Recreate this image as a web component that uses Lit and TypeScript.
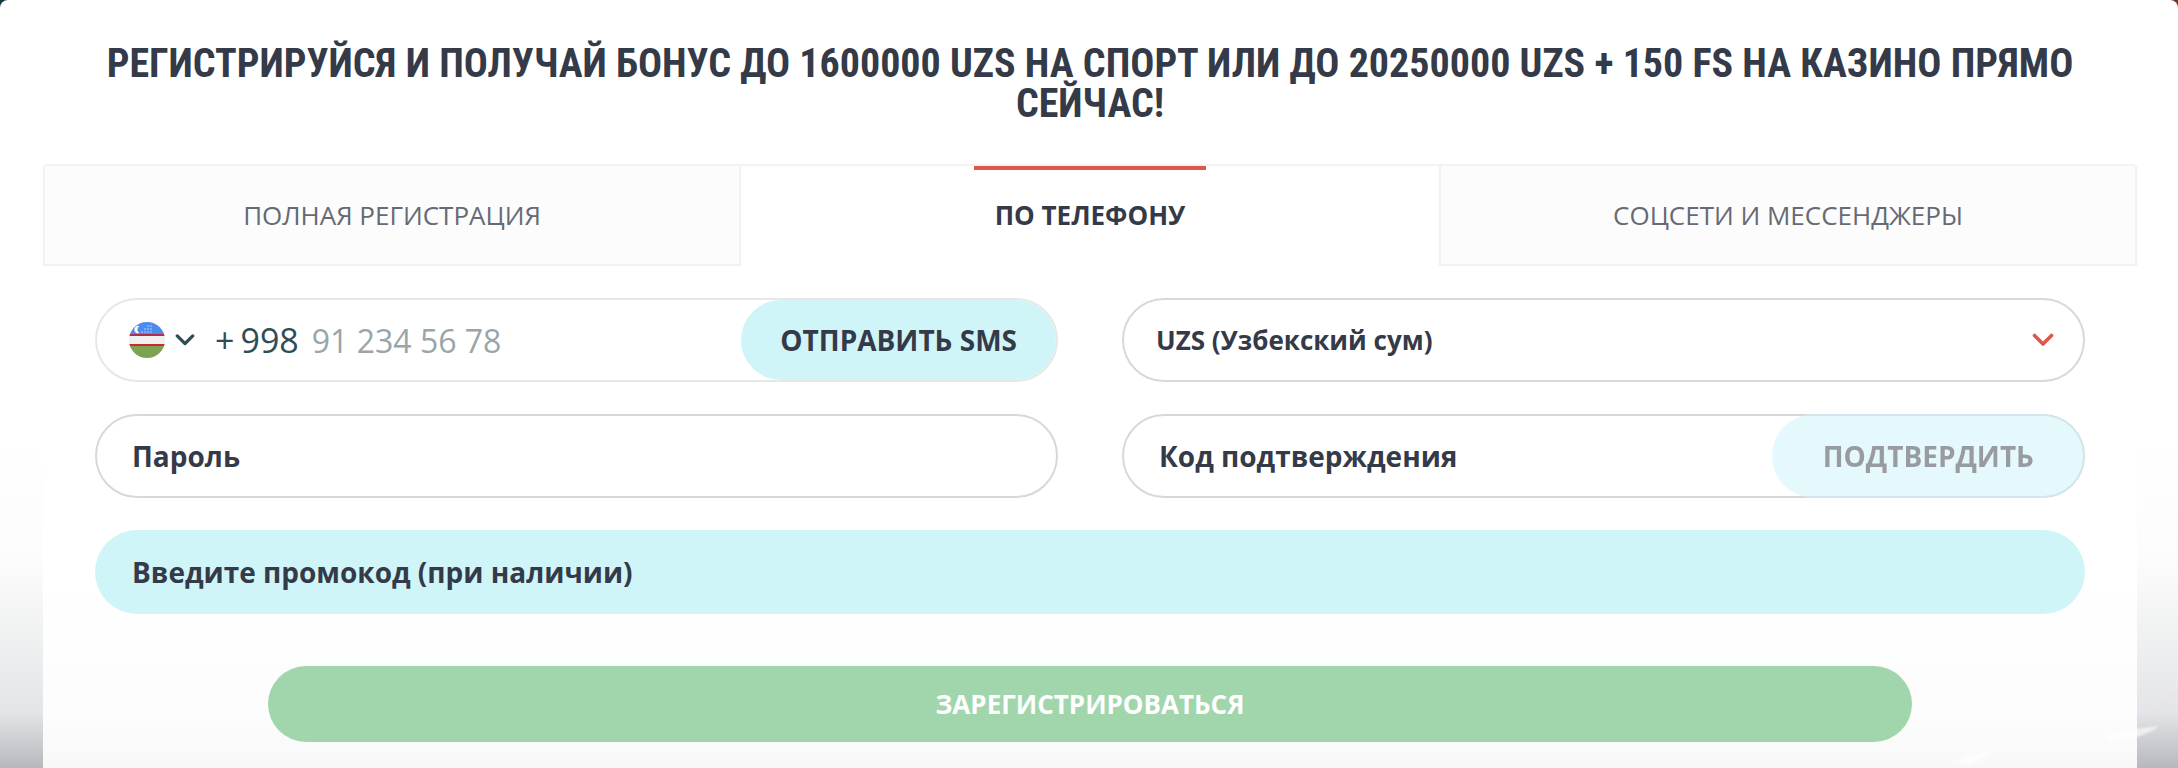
import { LitElement, html, css, svg } from "lit";
import { customElement, state } from "lit/decorators.js";

interface Tab {
  id: string;
  label: string;
}

const TABS: Tab[] = [
  { id: "full", label: "Полная регистрация" },
  { id: "phone", label: "По телефону" },
  { id: "social", label: "Соцсети и мессенджеры" },
];

// Star rows of the Uzbek flag: x, y pairs
const STARS: [number, number][] = [
  [13, 10], [16, 10], [19, 10], [22, 10],
  [16, 7], [19, 7], [22, 7],
  [19, 4], [22, 4],
];

@customElement("app-root")
export class AppRoot extends LitElement {
  @state() private active = "phone";

  static styles = css`
    :host {
      display: block;
      min-height: 100vh;
      font-family: "Open Sans", "Noto Sans", sans-serif;
      color: #343a48;
      background: linear-gradient(90deg, #14383c, #6b3a20);
    }
    * {
      box-sizing: border-box;
    }
    button,
    input,
    select {
      font: inherit;
      color: inherit;
      border: 0;
      margin: 0;
      padding: 0;
      background: none;
      outline: none;
    }
    button {
      cursor: pointer;
      text-transform: uppercase;
    }
    .modal {
      position: relative;
      display: flex;
      flex-direction: column;
      min-height: 100vh;
      padding: 44px 41px 0 43px;
      border-radius: 8px 8px 0 0;
      overflow: hidden;
      background: linear-gradient(
        #fff 0,
        #fff 440px,
        #fcfcfc 560px,
        #f2f3f3 620px,
        #e4e5e8 712px,
        #b7b8bd 768px
      );
    }
    .streaks {
      position: absolute;
      right: 0;
      bottom: 0;
      width: 220px;
      height: 168px;
      filter: blur(1px);
    }
    .title {
      margin: 0;
      padding: 0 52px;
      font: 700 40px/40px "Roboto Condensed", "Liberation Sans Narrow", sans-serif;
      text-align: center;
      text-transform: uppercase;
    }
    .panel {
      position: relative;
      flex: 1;
      margin-top: 40px;
      background: rgba(255, 255, 255, 0.9);
    }
    .tabs {
      display: grid;
      grid-template-columns: repeat(3, 1fr);
      border-top: 2px solid #f3f3f3;
      border-radius: 4px 4px 0 0;
    }
    .tab {
      display: flex;
      flex-direction: column;
      align-items: center;
      height: 100px;
      font-size: 26px;
      line-height: 36px;
      color: #666a74;
      background: #fcfcfc;
      border: solid #f1f1f1;
      border-width: 0 2px 2px;
    }
    .tab::before {
      content: "";
      width: 33.5%;
      height: 4px;
      margin-bottom: 27px;
    }
    .tab.on {
      font-weight: 700;
      color: #343a48;
      background: none;
      border-color: transparent;
    }
    .tab.on::before {
      background: #dd574b;
    }
    .form {
      display: grid;
      grid-template-columns: 1fr 1fr;
      gap: 32px 64px;
      padding: 32px 52px 26px;
    }
    .field {
      display: grid;
      align-items: center;
      height: 84px;
      border: 2px solid #d8d8d8;
      border-radius: 42px;
      font-size: 28px;
      font-weight: 700;
    }
    .field > * {
      grid-area: 1 / 1;
    }
    .field label {
      padding: 0 35px;
    }
    .field input {
      width: 100%;
      height: 80px;
      padding: 0 35px;
    }
    .phone {
      display: flex;
      border-color: #e7e7e7;
      color: #2f4d54;
      font-weight: 400;
    }
    .country {
      display: flex;
      align-items: center;
      gap: 10px;
      padding-left: 32px;
    }
    .code {
      display: flex;
      gap: 6px;
      margin-left: 20px;
      font-size: 34px;
    }
    .phone input {
      flex: 1;
      min-width: 0;
      padding: 0 0 0 13px;
      font-size: 32px;
    }
    .phone input::placeholder {
      color: #97a6aa;
      opacity: 1;
    }
    .pill {
      height: 80px;
      padding: 0 39px;
      border-radius: 40px;
      font-size: 28px;
      font-weight: 700;
      color: #343a48;
      background: #cff5f9;
    }
    .confirm {
      justify-self: end;
      height: 84px;
      margin: -2px;
      padding: 0 51px;
      border-radius: 42px;
      background: #ccf5fd;
      opacity: 0.5;
    }
    .currency select {
      width: 100%;
      height: 80px;
      padding: 0 32px;
      font-size: 26px;
      appearance: none;
    }
    .currency svg {
      justify-self: end;
      margin-right: 29px;
      pointer-events: none;
    }
    .promo {
      grid-column: 1 / -1;
      border-color: transparent;
      background: #cff5f9 border-box;
    }
    .submit {
      grid-column: 1 / -1;
      height: 76px;
      margin: 20px 173px 0;
      border-radius: 38px;
      font-size: 26px;
      font-weight: 700;
      color: #fff;
      background: #a1d6ac;
    }
  `;

  private chevron(color: string, width: number) {
    return html`<svg width=${width} height="14" viewBox="0 0 22 14" aria-hidden="true">
      ${svg`<path d="M2.5 2.5 11 11 19.5 2.5" fill="none" stroke=${color} stroke-width="3.6" stroke-linecap="round" stroke-linejoin="round" />`}
    </svg>`;
  }

  private flag() {
    return html`<svg width="36" height="36" viewBox="0 0 36 36" aria-hidden="true">
      <defs><clipPath id="disc"><circle cx="18" cy="18" r="18" /></clipPath></defs>
      <g clip-path="url(#disc)">
        <rect width="36" height="36" fill="#f0f0f0" />
        <rect width="36" height="12" fill="#4c8bf0" />
        <rect y="12" width="36" height="2" fill="#b32d48" />
        <rect y="22" width="36" height="2" fill="#c92b2b" />
        <rect y="24" width="36" height="12" fill="#7ca352" />
        <path d="M10.5 4.2a3.7 3.7 0 1 0 0 6.8 3.8 3.8 0 0 1 0-6.8z" fill="#fff" />
        ${STARS.map(([x, y]) => svg`<circle cx=${x} cy=${y} r="0.8" fill="#c3d7f9" />`)}
      </g>
    </svg>`;
  }

  render() {
    return html`
      <main class="modal">
        <svg class="streaks" viewBox="0 0 220 168" aria-hidden="true">
          <path d="M179 124 220 93" stroke="#f0dcde" stroke-width="1.5" opacity="0.7" />
          <path d="M148 136Q176 128 201 126 194 132 179 137L150 142Z" fill="#fff" opacity="0.6" />
          <path d="M0 160Q16 153 36 151 26 160 4 166Z" fill="#fff" opacity="0.6" />
        </svg>
        <h1 class="title">
          Регистрируйся и получай бонус до 1600000 UZS на спорт или до 20250000 UZS + 150 FS на
          казино прямо сейчас!
        </h1>
        <section class="panel">
          <div class="tabs" role="tablist">
            ${TABS.map(
              (t) => html`<button
                type="button"
                role="tab"
                class="tab ${t.id === this.active ? "on" : ""}"
                aria-selected=${t.id === this.active}
                @click=${() => (this.active = t.id)}
              >
                ${t.label}
              </button>`
            )}
          </div>
          <form class="form" @submit=${(e: Event) => e.preventDefault()}>
            <div class="field phone">
              <button type="button" class="country" aria-label="Узбекистан">
                ${this.flag()}${this.chevron("#2f4d54", 20)}
              </button>
              <span class="code"><span>+</span><span>998</span></span>
              <input type="tel" aria-label="Телефон" placeholder="91 234 56 78" />
              <button type="button" class="pill">Отправить SMS</button>
            </div>
            <div class="field currency">
              <select aria-label="Валюта">
                <option>UZS (Узбекский сум)</option>
              </select>
              ${this.chevron("#dd574b", 22)}
            </div>
            <div class="field">
              <label for="password">Пароль</label>
              <input id="password" type="password" />
            </div>
            <div class="field">
              <label for="otp">Код подтверждения</label>
              <input id="otp" type="text" />
              <button type="button" class="pill confirm" disabled>Подтвердить</button>
            </div>
            <div class="field promo">
              <label for="promo">Введите промокод (при наличии)</label>
              <input id="promo" type="text" />
            </div>
            <button type="submit" class="submit">Зарегистрироваться</button>
          </form>
        </section>
      </main>
    `;
  }
}
